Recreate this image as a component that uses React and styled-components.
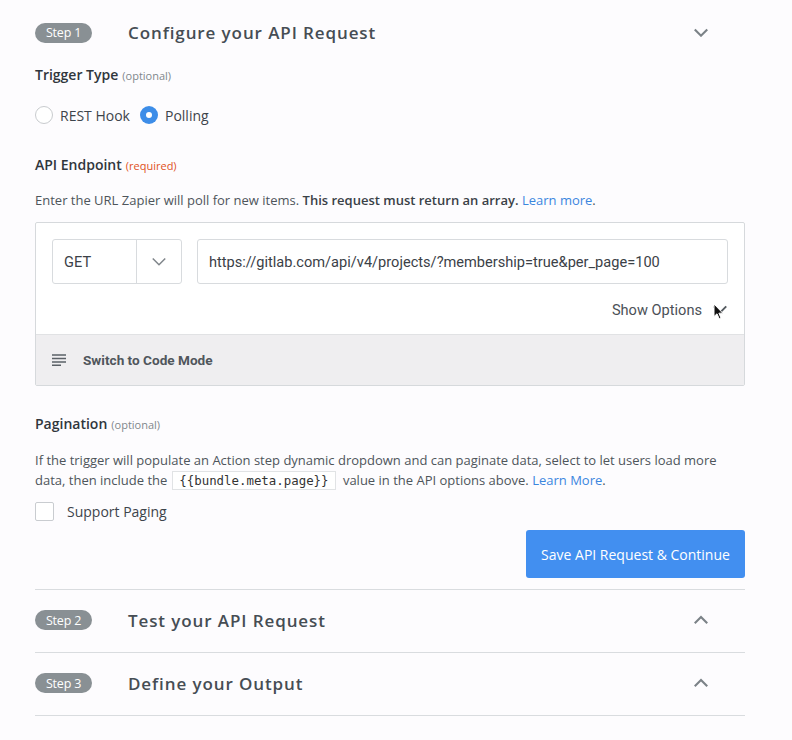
import styled, { createGlobalStyle } from "styled-components";

const Global = createGlobalStyle`
  body {
    margin: 0;
    background: #fdfcfe;
    font-family: "Open Sans", "Liberation Sans", sans-serif;
    color: #3d444b;
  }
`;

const Page = styled.div`
  width: 710px;
  padding: 0 0 0 35px;
`;

const StepHeader = styled.div`
  display: flex;
  align-items: center;
  box-sizing: border-box;
  height: ${(p) => p.h || 63}px;
  padding-bottom: ${(p) => (p.line ? 2 : 0)}px;
  border-bottom: ${(p) => (p.line ? "1px solid #d9dcdf" : "none")};
`;

const Pill = styled.span`
  display: inline-flex;
  align-items: center;
  justify-content: center;
  width: 57px;
  height: 20px;
  border-radius: 10px;
  background: #899094;
  color: #fff;
  font-size: 12.5px;
  letter-spacing: -0.2px;
`;

const StepTitle = styled.span`
  flex: 1;
  margin-left: 36px;
  font-size: 17px;
  font-weight: 600;
  letter-spacing: 0.9px;
  color: #464d54;
`;

const Chevron = ({ up, size = 16, color = "#7b8287", width = 2.2 }) => (
  <svg width={size} height={size * 0.6} viewBox="0 0 16 10" fill="none">
    <path
      d={up ? "M1.5 8.5L8 2L14.5 8.5" : "M1.5 1.5L8 8L14.5 1.5"}
      stroke={color}
      strokeWidth={width}
    />
  </svg>
);

const ChevBox = styled.span`
  display: flex;
  width: 16px;
  margin-right: 36px;
`;

const Label = styled.div`
  font-size: 14px;
  font-weight: 600;
  color: #30363c;
  margin: ${(p) => p.m || "0"};
  span {
    font-size: 11px;
    font-weight: 400;
    color: ${(p) => (p.required ? "#e0521f" : "#81878c")};
    margin-left: 4px;
  }
`;

const RadioRow = styled.div`
  display: flex;
  align-items: center;
  margin-top: 21px;
  height: 20px;
  font-size: 14px;
  color: #3d444b;
`;

const Radio = styled.span`
  width: 18px;
  height: 18px;
  border-radius: 50%;
  box-sizing: border-box;
  border: ${(p) => (p.on ? "none" : "1px solid #c8cbce")};
  background: ${(p) => (p.on ? "#3d8de8" : "#fff")};
  display: inline-flex;
  align-items: center;
  justify-content: center;
  margin-right: 7px;
  &::after {
    content: "";
    width: 6px;
    height: 6px;
    border-radius: 50%;
    background: #fff;
    display: ${(p) => (p.on ? "block" : "none")};
  }
`;

const RadioText = styled.span`
  margin-right: 10px;
`;

const Desc = styled.p`
  font-size: 13px;
  line-height: 20px;
  color: #4e555b;
  margin: ${(p) => p.m || "0"};
  b {
    font-weight: 600;
    color: #3a4147;
  }
  a {
    color: #3b86de;
    text-decoration: none;
  }
`;

const Code = styled.code`
  display: inline-block;
  font-family: "DejaVu Sans Mono", "Liberation Mono", monospace;
  font-size: 12.4px;
  line-height: 17px;
  color: #333;
  border: 1px solid #e1e3e5;
  background: #fff;
  padding: 0 6px;
  margin: 0 4px 0 5px;
`;

const Box = styled.div`
  margin-top: 12px;
  border: 1px solid #d6d9dc;
  border-radius: 2px;
  background: #fff;
`;

const BoxBody = styled.div`
  padding: 16px 16px 13px;
`;

const InputRow = styled.div`
  display: flex;
  gap: 15px;
`;

const Select = styled.div`
  display: flex;
  width: 130px;
  height: 45px;
  box-sizing: border-box;
  border: 1px solid #d8dbde;
  border-radius: 3px;
  font-family: Roboto, "Liberation Sans", sans-serif;
  font-size: 14.6px;
  color: #3b4147;
`;

const SelectValue = styled.span`
  flex: 1;
  display: flex;
  align-items: center;
  padding-left: 11px;
  border-right: 1px solid #d8dbde;
`;

const SelectArrow = styled.span`
  width: 44px;
  display: flex;
  align-items: center;
  justify-content: center;
`;

const UrlInput = styled.div`
  flex: 1;
  height: 45px;
  box-sizing: border-box;
  border: 1px solid #d8dbde;
  border-radius: 3px;
  display: flex;
  align-items: center;
  padding-left: 11px;
  font-family: Roboto, "Liberation Sans", sans-serif;
  font-size: 14.6px;
  color: #3b4147;
`;

const OptionsRow = styled.div`
  display: flex;
  justify-content: flex-end;
  align-items: center;
  margin-top: 15px;
  height: 22px;
  font-family: Roboto, "Liberation Sans", sans-serif;
  font-size: 14.6px;
  color: #4b5157;
  gap: 10px;
`;

const CursorWrap = styled.span`
  position: relative;
  display: flex;
  width: 16px;
`;

const Cursor = styled.svg`
  position: absolute;
  left: 1px;
  top: -2px;
`;

const CodeBar = styled.div`
  display: flex;
  align-items: center;
  height: 50px;
  background: #efeef0;
  border-top: 1px solid #e1e2e4;
  padding-left: 16px;
  font-family: Roboto, "Liberation Sans", sans-serif;
  font-weight: 700;
  font-size: 13.6px;
  color: #50565c;
  gap: 17px;
`;

const PagingRow = styled.label`
  display: flex;
  align-items: center;
  margin-top: 12px;
  font-size: 14px;
  color: #3d444b;
  gap: 13px;
`;

const Check = styled.span`
  width: 19px;
  height: 19px;
  box-sizing: border-box;
  border: 1px solid #c9ccd0;
  border-radius: 2px;
  background: #fff;
`;

const Actions = styled.div`
  display: flex;
  justify-content: flex-end;
  margin-top: 9px;
  padding-bottom: 11px;
  border-bottom: 1px solid #d9dcdf;
`;

const Button = styled.button`
  width: 219px;
  height: 48px;
  border: none;
  border-radius: 3px;
  background: #428ff0;
  color: #fff;
  font-family: "Open Sans", "Liberation Sans", sans-serif;
  font-size: 14px;
`;

function Step({ n, title, up, line, h }) {
  return (
    <StepHeader line={line} h={h}>
      <Pill>Step {n}</Pill>
      <StepTitle>{title}</StepTitle>
      <ChevBox>
        <Chevron up={up} />
      </ChevBox>
    </StepHeader>
  );
}

export default function App() {
  return (
    <Page>
      <Global />
      <Step n={1} title="Configure your API Request" h={65} />
      <Label>
        Trigger Type<span>(optional)</span>
      </Label>
      <RadioRow>
        <Radio />
        <RadioText>REST Hook</RadioText>
        <Radio on />
        <RadioText>Polling</RadioText>
      </RadioRow>
      <Label m="30px 0 0" required>
        API Endpoint<span>(required)</span>
      </Label>
      <Desc m="16px 0 0">
        Enter the URL Zapier will poll for new items.{" "}
        <b>This request must return an array.</b> <a href="#">Learn more</a>.
      </Desc>
      <Box>
        <BoxBody>
          <InputRow>
            <Select>
              <SelectValue>GET</SelectValue>
              <SelectArrow>
                <Chevron size={16} color="#80868b" width={1.6} />
              </SelectArrow>
            </Select>
            <UrlInput>
              https://gitlab.com/api/v4/projects/?membership=true&amp;per_page=100
            </UrlInput>
          </InputRow>
          <OptionsRow>
            Show Options
            <CursorWrap>
              <Chevron size={16} color="#555b60" width={2} />
              <Cursor width="11" height="17" viewBox="0 0 11 17">
                <path
                  d="M1 1L1 13.5L4 10.8L6.2 15.8L8 15L5.9 10.2L9.8 10.2Z"
                  fill="#111"
                  stroke="#fff"
                  strokeWidth="1"
                />
              </Cursor>
            </CursorWrap>
          </OptionsRow>
        </BoxBody>
        <CodeBar>
          <svg width="14" height="12" viewBox="0 0 14 12">
            <path
              d="M0 1h14M0 4.5h14M0 8h14M0 11.3h9"
              stroke="#5b6167"
              strokeWidth="1.6"
            />
          </svg>
          Switch to Code Mode
        </CodeBar>
      </Box>
      <Label m="28px 0 0">
        Pagination<span>(optional)</span>
      </Label>
      <Desc m="17px 0 0">
        If the trigger will populate an Action step dynamic dropdown and can
        paginate data, select to let users load more data, then include the
        <Code>{"{{bundle.meta.page}}"}</Code> value in the API options above.{" "}
        <a href="#">Learn More</a>.
      </Desc>
      <PagingRow>
        <Check />
        Support Paging
      </PagingRow>
      <Actions>
        <Button>Save API Request &amp; Continue</Button>
      </Actions>
      <Step n={2} title="Test your API Request" up line />
      <Step n={3} title="Define your Output" up line />
    </Page>
  );
}
